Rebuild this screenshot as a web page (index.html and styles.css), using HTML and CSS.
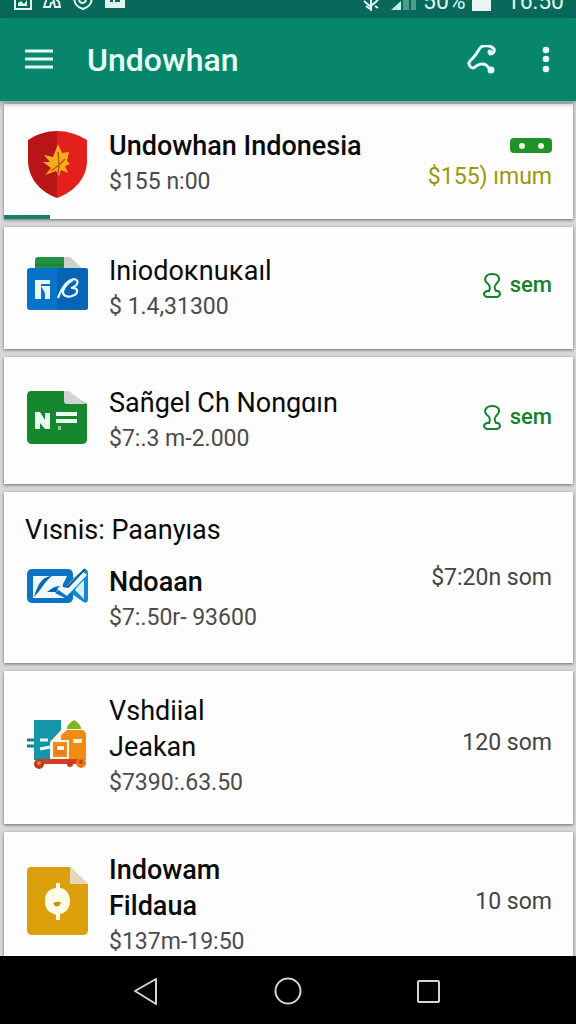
FILE: index.html
```html
<!DOCTYPE html>
<html lang="id">
<head>
    <meta charset="UTF-8">
    <meta name="viewport" content="width=device-width, initial-scale=1.0">
    <title>Undowhan</title>
    <link rel="stylesheet" href="styles.css">
</head>
<body>
    <!-- Status Bar -->
    <div class="status-bar">
        <svg class="status-icons" width="114" height="12" viewBox="0 0 114 12" fill="none" stroke="#dff5ee" stroke-width="2">
            <path d="M3-6V9H19V-6"/>
            <path d="M6 6V3L9 1L12 4L15 0V6Z" fill="#dff5ee" stroke="none"/>
            <path d="M35-2L32 7H38L39 3L42 2L43 7H48L47 2L44-1M40-4L42 1"/>
            <path d="M62-4C62 4 65 7 71 9C77 7 80 4 80-4M67 0C68 4 73 4 74 0"/>
            <path d="M93-8H113V8H93Z" fill="#dff5ee" stroke="none"/>
            <path d="M98 1H101M103 1H108" stroke="#08695a"/>
        </svg>
        <div class="status-right">
            <svg width="54" height="12" viewBox="0 0 54 12">
                <path d="M1 1L8 7M8 0V11M15 0L8 6M3 6L7 9M12 6L15 8" stroke="#dff5ee" stroke-width="2" fill="none"/>
                <path d="M28 10L38 1V10Z" fill="#c4f0e2"/>
                <path d="M40-4H46V10H40ZM48-4H53V10H48Z" fill="#4d9b8a"/>
            </svg>
            <span>50%</span>
            <span class="battery"></span>
            <span class="clock">16:50</span>
        </div>
    </div>

    <!-- App Bar -->
    <header class="app-bar">
        <button class="icon-btn" aria-label="Menu">
            <svg width="28" height="28" viewBox="0 0 28 28" stroke="#e6fff8" stroke-width="3">
                <path d="M0 5H28M0 13H28M0 21H28"/>
            </svg>
        </button>
        <h1>Undowhan</h1>
        <button class="icon-btn" aria-label="Share">
            <svg width="30" height="30" viewBox="0 0 30 30" fill="none" stroke="#e6fff8" stroke-width="3" stroke-linecap="round" stroke-linejoin="round">
                <path d="M23 9C26 9 28 7 27 4C24 0 17 0 14 2C11 5 10 9 6 13C3 16 1 17 2 19C3 23 6 24 8 22C11 19 16 18 19 20L23 24"/>
                <circle cx="24" cy="25" r="2" fill="#e6fff8"/>
                <circle cx="23" cy="7" r="1" fill="#e6fff8"/>
            </svg>
        </button>
        <button class="icon-btn more" aria-label="More options">
            <svg width="8" height="28" viewBox="0 0 8 28" fill="#e6fff8">
                <circle cx="4" cy="4" r="3.3"/><circle cx="4" cy="13" r="3.3"/><circle cx="4" cy="23" r="3.3"/>
            </svg>
        </button>
    </header>

    <!-- Account List -->
    <main class="list">
        <section class="card card-active">
            <div class="row">
                <svg class="icon" viewBox="0 0 64 72">
                    <path d="M32 3C22 3 12 6 3 12V34C4 53 18 65 32 70Z" fill="#b91518"/>
                    <path d="M32 3C42 3 52 6 62 12V34C61 53 46 65 32 70Z" fill="#e3201c"/>
                    <path d="M33 16L37 25L44 24L42 33L45 36L40 38L43 45L36 42L34 48L31 43L20 47L26 40L18 34L25 34L19 27L28 29Z" fill="#f5ae1b"/>
                    <path d="M33 24L34 37L26 43M34 37L40 31M34 37L33 46" stroke="#c4521a" stroke-width="1.5" fill="none"/>
                </svg>
                <div class="info">
                    <h2 class="bold">Undowhan Indonesia</h2>
                    <p>$155 n:00</p>
                </div>
                <div class="amount stacked">
                    <svg width="42" height="15" viewBox="0 0 42 15">
                        <rect width="42" height="15" rx="4" fill="#1f9329"/>
                        <circle cx="12" cy="8" r="3" fill="#e8ffe4"/><circle cx="31" cy="8" r="3" fill="#e8ffe4"/>
                    </svg>
                    <span class="olive">$155) ımum</span>
                </div>
            </div>
        </section>

        <section class="card">
            <div class="row">
                <svg class="icon" viewBox="0 0 64 72">
                    <path d="M10 18V7Q10 4 13 4H40V18Z" fill="#239044"/>
                    <path d="M10 12H40" stroke="#157835" stroke-width="1"/>
                    <path d="M39 4H45L58 16V18H39Z" fill="#cfcfcf"/>
                    <rect x="2" y="15" width="61" height="42" rx="3" fill="#0873c8"/>
                    <path d="M32 15H60Q63 15 63 18V54Q63 57 60 57H32Z" fill="#0765b5"/>
                    <path d="M10 27H25V31H16V46H10ZM16 33H25V46H20V40Z" fill="#e5f8ff"/>
                    <path d="M33 45C37 34 42 27 49 26C55 27 53 33 46 35C54 34 54 41 47 43C42 45 37 42 38 38C40 32 44 29 48 27" fill="none" stroke="#e5f8ff" stroke-width="2.2"/>
                </svg>
                <div class="info">
                    <h2>Iniodoĸnuĸaıl</h2>
                    <p>$ 1.4,31300</p>
                </div>
                <div class="amount green">
                    <svg width="20" height="25" viewBox="0 0 18 25" fill="none" stroke="#16812c" stroke-width="2">
                        <path d="M6 18C8 14 7 12 4 10C0 6 3 1 9 1C16 1 18 6 14 10C11 13 11 15 13 18H15Q17 19 17 21T14 24H4Q1 23 1 21T4 18H7"/>
                    </svg>
                    <span>sem</span>
                </div>
            </div>
        </section>

        <section class="card card-tall">
            <div class="row">
                <svg class="icon" viewBox="0 0 64 72">
                    <path d="M6 6H40L62 19V54Q62 59 57 59H7Q2 59 2 54V11Q2 6 6 6Z" fill="#15872f"/>
                    <path d="M39 6H44L61 19H42Q39 19 39 16Z" fill="#d2d3d2"/>
                    <path d="M10 27H15L20 35V28H25V44H20L15 38V44H10Z" fill="#e8fff0"/>
                    <path d="M31 29H52M31 36H52" stroke="#e8fff0" stroke-width="4"/>
                    <path d="M33 41H36V45H33Z" fill="#8bcb98"/>
                </svg>
                <div class="info">
                    <h2>Sañgel Ch Nongɑın</h2>
                    <p>$7:.3 m-2.000</p>
                </div>
                <div class="amount green">
                    <svg width="20" height="25" viewBox="0 0 18 25" fill="none" stroke="#16812c" stroke-width="2">
                        <path d="M6 18C8 14 7 12 4 10C0 6 3 1 9 1C16 1 18 6 14 10C11 13 11 15 13 18H15Q17 19 17 21T14 24H4Q1 23 1 21T4 18H7"/>
                    </svg>
                    <span>sem</span>
                </div>
            </div>
        </section>

        <section class="card card-group">
            <h2 class="group-title">Vısnis: Paanyıas</h2>
            <div class="row">
                <svg class="icon" viewBox="0 0 64 72">
                    <rect x="2" y="5" width="46" height="34" rx="5" fill="#0b72c4"/>
                    <path d="M44 18L57 7Q63 3 63 10V36Q62 41 57 37L44 28Z" fill="#1687d2"/>
                    <path d="M8 12H42L36 24L30 29L40 34H8Z" fill="#edfaff"/>
                    <path d="M9 33C13 18 19 12 27 12C19 18 17 25 9 33Z" fill="#0b65ad"/>
                    <path d="M22 28Q30 21 36 22L31 28Z" fill="#0b65ad"/>
                    <path d="M32 25L42 32L62 11L57 7L42 22L36 21Z" fill="#edfaff"/>
                    <path d="M52 23L59 16V35L50 26Z" fill="#d5f3ff"/>
                    <path d="M38 22L43 23L60 5" fill="none" stroke="#075c9e" stroke-width="2"/>
                </svg>
                <div class="info">
                    <h2 class="bold">Ndoaan</h2>
                    <p>$7:.50r- 93600</p>
                </div>
                <div class="amount top">$7:20n som</div>
            </div>
        </section>

        <section class="card card-double">
            <div class="row">
                <svg class="icon" viewBox="0 0 64 72">
                    <path d="M9 9H36V49H9Z" fill="#1596a8"/>
                    <path d="M36 24L42 19H57Q61 20 61 24V49H34Z" fill="#f18b12"/>
                    <path d="M42 18Q42 13 49 9Q56 13 56 18Z" fill="#7eb61b"/>
                    <path d="M25 31L36 19V49H25Z" fill="#fff3df"/>
                    <path d="M27 30H43V47H27Z" fill="#ef8d21" stroke="#fff3df" stroke-width="2"/>
                    <path d="M30 34H40V44H30Z" fill="#e57d1c"/>
                    <path d="M32 35H39V39H32ZM48 28H57V32H48Z" fill="#fff3df"/>
                    <path d="M2 29H9M2 35H9" stroke="#167e91" stroke-width="3"/>
                    <path d="M15 29H23M15 38L25 36" stroke="#e8fbff" stroke-width="3"/>
                    <path d="M12 48H54V53H12Z" fill="#d63c28"/>
                    <circle cx="14" cy="53" r="5" fill="#bd3d1c"/><circle cx="14" cy="52" r="2" fill="#ec7f3a"/>
                    <circle cx="45" cy="53" r="3" fill="#bd3d1c"/>
                    <circle cx="56" cy="52" r="5" fill="#e67818"/><circle cx="56" cy="51" r="2" fill="#bd4916"/>
                </svg>
                <div class="info">
                    <h2>Vshdiial<br>Jeakan</h2>
                    <p>$7390:.63.50</p>
                </div>
                <div class="amount">120 som</div>
            </div>
        </section>

        <section class="card card-last">
            <div class="row">
                <svg class="icon" viewBox="0 0 64 72">
                    <path d="M6 -3H45L63 14V60Q63 65 58 65H7Q2 65 2 60V1Q2 -3 6 -3Z" fill="#dda00d"/>
                    <path d="M45-3L63 14H45Z" fill="#e4d5bd"/>
                    <path d="M31 13H35V18C42 19 45 25 45 31C45 39 40 43 35 44V50H31V45L27 43C22 41 20 37 20 31C20 24 23 19 31 18Z" fill="#fffbe9"/>
                    <path d="M28 33Q32 31 36 32Q34 38 30 36Z" fill="#cc930f"/>
                </svg>
                <div class="info">
                    <h2 class="medium">Indowam<br>Fildaua</h2>
                    <p>$137m-19:50</p>
                </div>
                <div class="amount">10 som</div>
            </div>
        </section>
    </main>

    <!-- Navigation Bar -->
    <nav class="nav-bar">
        <button class="icon-btn" aria-label="Back">
            <svg width="28" height="30" viewBox="0 0 28 30"><path d="M2 16L23 4V29Z" fill="none" stroke="#d4d4d4" stroke-width="2" stroke-linejoin="round"/></svg>
        </button>
        <button class="icon-btn" aria-label="Home">
            <svg width="28" height="30" viewBox="0 0 28 30"><circle cx="14" cy="16" r="12.5" fill="none" stroke="#d4d4d4" stroke-width="2"/></svg>
        </button>
        <button class="icon-btn" aria-label="Recent apps">
            <svg width="28" height="30" viewBox="0 0 28 30"><rect x="3" y="6" width="21" height="21" rx="1" fill="none" stroke="#d4d4d4" stroke-width="2"/></svg>
        </button>
    </nav>
</body>
</html>
```
FILE: styles.css
```css
* {
    box-sizing: border-box;
}

body {
    font-family: Roboto, sans-serif;
    margin: 0;
    height: 100vh;
    display: flex;
    flex-direction: column;
    overflow: hidden;
    background-color: #d8d8da;
    color: #0a0a0a;
}

h1, h2, p {
    margin: 0;
}

svg {
    display: block;
    flex-shrink: 0;
}

.icon-btn {
    padding: 0;
    border: none;
    background: none;
    cursor: pointer;
}

/* Status Bar */
.status-bar {
    display: flex;
    justify-content: space-between;
    align-items: flex-start;
    flex-shrink: 0;
    height: 18px;
    padding: 0 12px;
    background-color: #08695a;
    color: #dff5ee;
    font-size: 23px;
    line-height: 4px;
    overflow: hidden;
}

.status-right {
    display: flex;
    gap: 6px;
}

.battery {
    width: 19px;
    height: 11px;
    background-color: #e8f5f2;
}

.clock {
    margin-left: 10px;
}

/* App Bar */
.app-bar {
    display: flex;
    align-items: center;
    flex-shrink: 0;
    height: 83px;
    padding: 0 26px 0 25px;
    background-color: #08866b;
    box-shadow: 0 2px 6px rgba(0, 0, 0, 0.4);
    color: #e6fff8;
    z-index: 1;
}

.app-bar h1 {
    flex: 1;
    margin-left: 34px;
    font-size: 32px;
    font-weight: 500;
}

.more {
    margin-left: 45px;
}

/* Account List */
.list {
    display: flex;
    flex-direction: column;
    flex: 1;
    gap: 8px;
    min-height: 0;
    padding: 3px 3px 0 4px;
    overflow: hidden;
}

.card {
    flex-shrink: 0;
    padding: 26px 21px 24px;
    background-color: #fdfdfd;
    box-shadow: 0 1px 3px rgba(0, 0, 0, 0.5);
}

.card-active {
    padding: 24px 21px 19px;
    background-image: linear-gradient(#178068, #178068);
    background-repeat: no-repeat;
    background-position: left bottom;
    background-size: 46px 4px;
}

.card-tall {
    padding: 28px 21px 27px;
}

.card-group {
    padding: 20px 21px 27px;
}

.card-double {
    padding: 22px 21px 23px;
}

.card-last {
    padding-top: 20px;
}

.row {
    display: flex;
    align-items: center;
    gap: 20px;
}

.icon {
    width: 64px;
    height: 72px;
    overflow: visible;
}

.info {
    flex: 1;
    min-width: 0;
}

h2 {
    font-size: 27px;
    font-weight: 400;
    line-height: 36px;
}

h2.medium,
h2.bold {
    font-weight: 500;
}

.group-title {
    margin-bottom: 16px;
}

.info p {
    color: #4b4b4b;
    font-size: 23px;
    line-height: 36px;
}

/* Right Column */
.amount {
    display: flex;
    align-items: center;
    gap: 8px;
    padding-bottom: 8px;
    color: #444;
    font-size: 23px;
    line-height: 28px;
}

.amount.stacked {
    flex-direction: column;
    align-items: flex-end;
    gap: 10px;
    padding-bottom: 0;
}

.amount.top {
    align-self: flex-start;
}

.olive {
    color: #99990f;
}

.green {
    color: #16812c;
    font-size: 22px;
    font-weight: 500;
}

/* Navigation Bar */
.nav-bar {
    display: flex;
    justify-content: center;
    align-items: center;
    flex-shrink: 0;
    gap: 113px;
    height: 68px;
    background-color: #000;
}
```
